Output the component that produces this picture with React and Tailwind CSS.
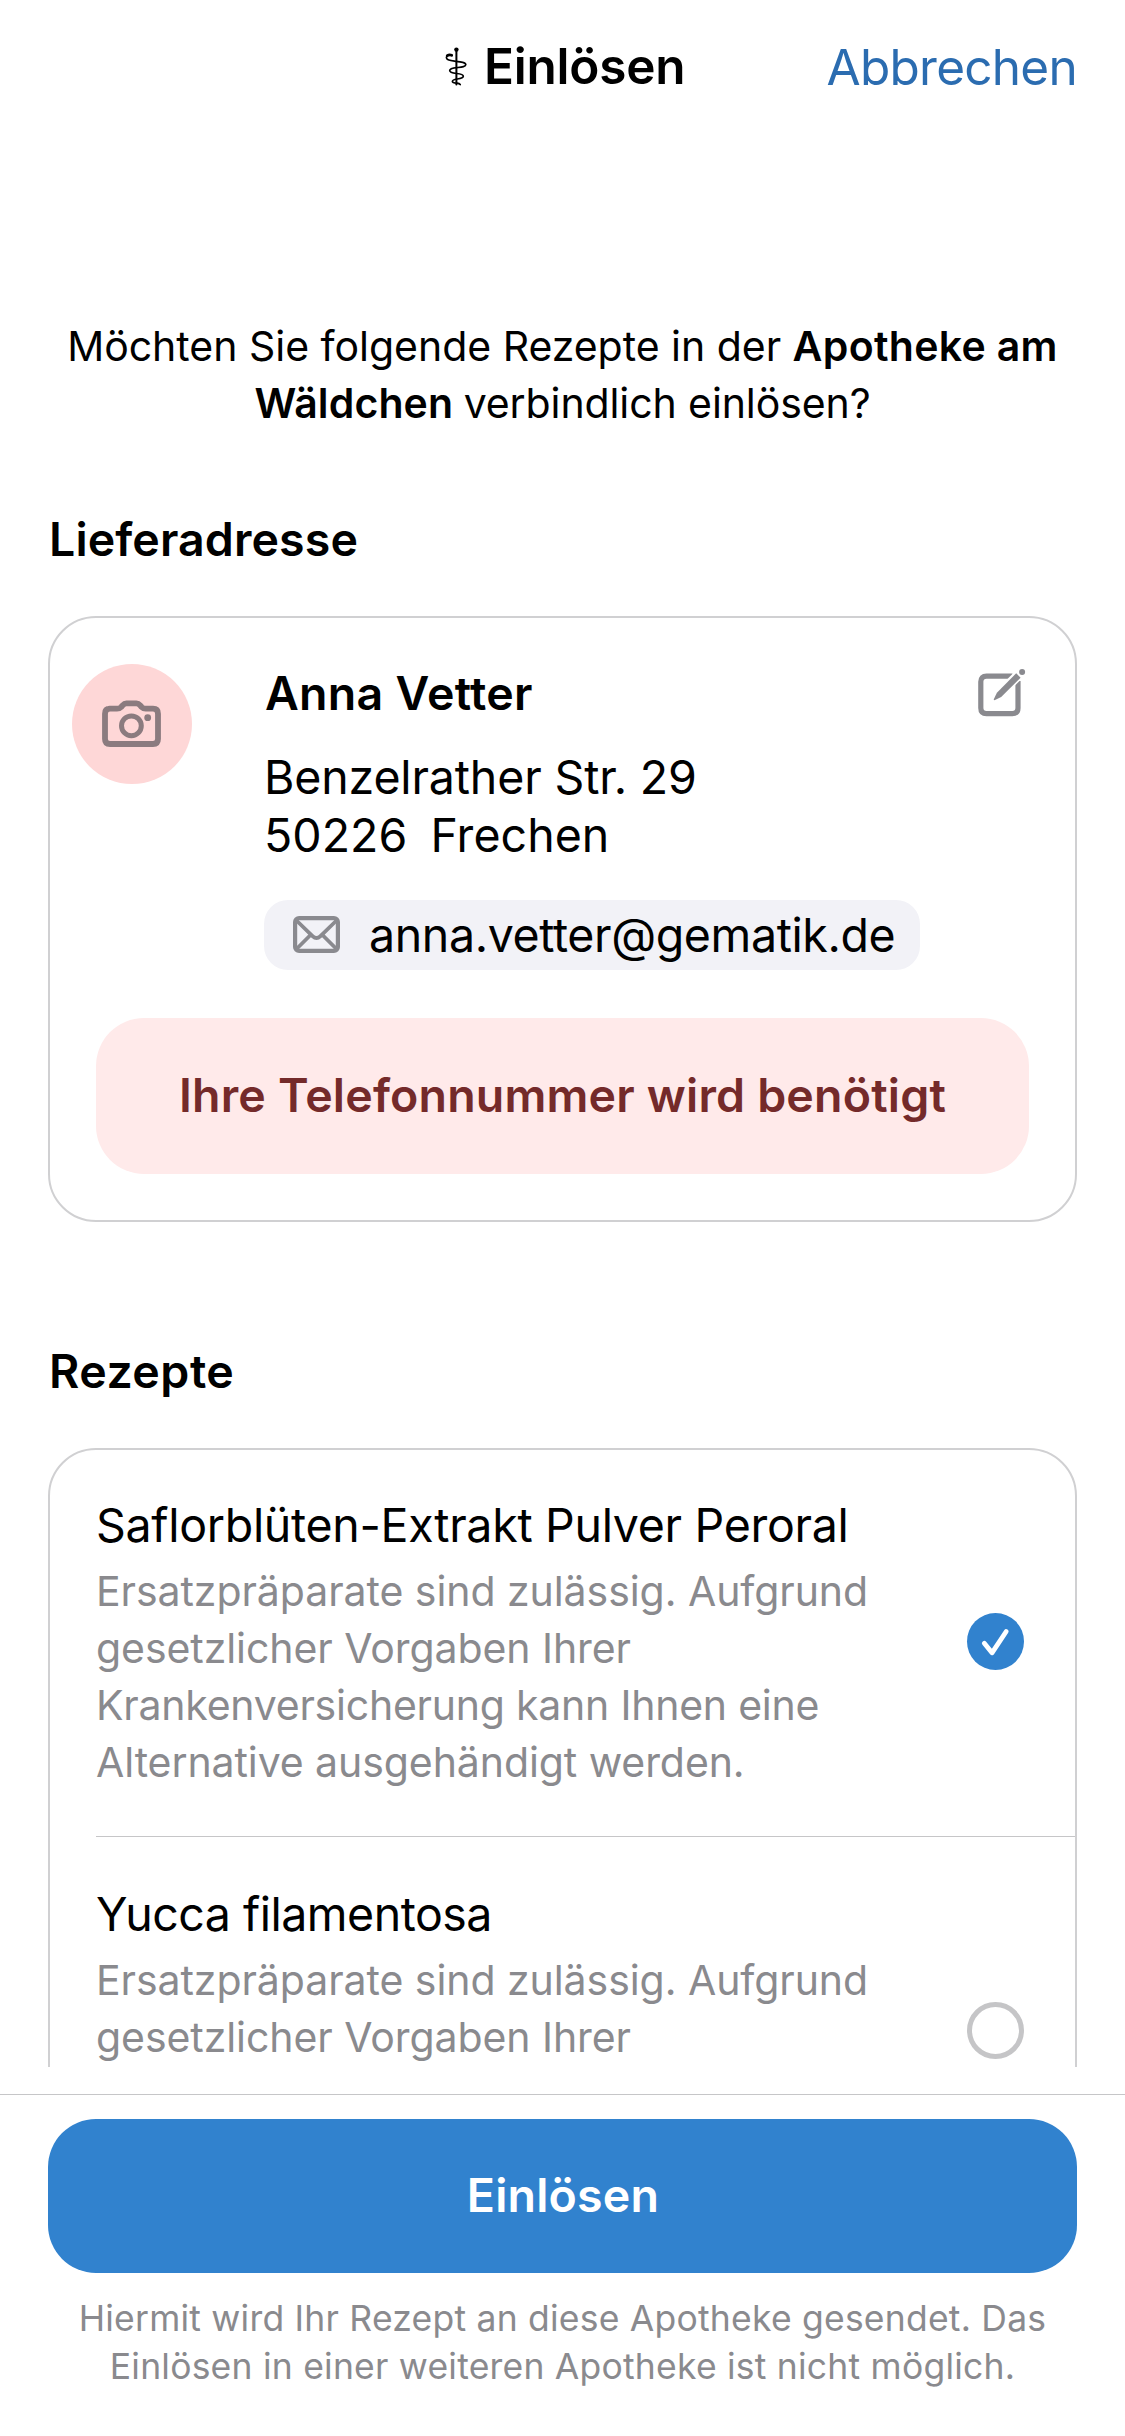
function StaffIcon() {
  return (
    <svg className="h-[40px] w-[24px] shrink-0" viewBox="0 0 24 40" fill="none" stroke="#000" strokeLinecap="round">
      <circle cx="12.4" cy="3.6" r="2.2" fill="#000" stroke="none" />
      <path d="M12.4 4V38.6" strokeWidth="2" />
      <path
        d="M7.6 9.4C5 8.2 2.4 9.6 2.4 11.6C2.4 13.9 6 14.8 10.5 15.2C16 15.7 21.8 16 21.8 18.6C21.8 21 17.5 21.2 13 21.6C9 21.9 5.7 22.4 5.7 24.6C5.7 26.8 9.3 27.2 12.5 27.5C16 27.8 19.3 28.2 19.3 30.3C19.3 32.2 16.5 32.6 13.3 33C10.5 33.4 8.4 33.9 8.4 35.4C8.4 36.7 10.8 37 13 37.2C14.7 37.4 15.6 37.8 16.2 38.6"
        strokeWidth="1.7"
      />
      <path d="M3.2 9.7C4.7 8.7 6.5 8.8 7.8 9.3" strokeWidth="2.6" />
    </svg>
  );
}

function CameraIcon() {
  return (
    <svg className="h-[48px] w-[60px]" viewBox="0 0 60 48" fill="none" stroke="#8b7b7f">
      <path
        d="M7.5 8.7H15C16.8 8.7 18 8.2 19.2 7L20.6 5.4C21.7 4.1 22.6 3.3 24.4 3.3H34.4C36.2 3.3 37.1 4.1 38.2 5.4L39.6 7C40.8 8.2 42 8.7 43.8 8.7H51Q56 8.7 56 13.7V39Q56 44 51 44H8Q3 44 3 39V13.7Q3 8.7 8 8.7Z"
        strokeWidth="5.8"
        strokeLinejoin="round"
      />
      <circle cx="29.4" cy="25.8" r="9.9" strokeWidth="5" />
      <circle cx="45.7" cy="17.7" r="3.4" fill="#8b7b7f" stroke="none" />
    </svg>
  );
}

function EditIcon() {
  return (
    <svg className="h-[50px] w-[50px]" viewBox="0 0 50 50" fill="none">
      <path
        d="M34.5 7.1H8.5Q2.8 7.1 2.8 12.8V39Q2.8 44.6 8.500 44.6H34.300Q40 44.6 40 39V12"
        stroke="#8a8a8f"
        strokeWidth="5.2"
      />
      <path d="M45 1.500L16 30.500" stroke="#fff" strokeWidth="10" />
      <path d="M38.2 4.3L42.6 8.700L23.200 28L17 31.100Q15.400 31.500 15.900 30L18.900 23.800Z" fill="#8a8a8f" />
      <circle cx="44.1" cy="3.1" r="3" fill="#8a8a8f" />
    </svg>
  );
}

function EnvelopeIcon() {
  return (
    <svg className="-mt-px h-[37px] w-[47px] shrink-0" viewBox="0 0 47 37" fill="none" stroke="#8a8a8f">
      <rect x="2.1" y="2.1" width="42.8" height="32.8" rx="4" strokeWidth="4.2" />
      <path d="M3.5 4.5L19.8 20.3Q23.5 23.900 27.2 20.3L43.5 4.5" strokeWidth="3.8" />
      <path d="M3.5 33L17.5 19M43.5 33L29.5 19" strokeWidth="3.8" />
    </svg>
  );
}

function SelectionMark({ checked }) {
  if (!checked) {
    return <span className="-mt-[3px] size-[57px] shrink-0 rounded-full border-5 border-[#c5c5c7]" />;
  }
  return (
    <span className="-mt-[3px] flex size-[57px] shrink-0 items-center justify-center rounded-full bg-[#3182ce]">
      <svg className="size-[57px]" viewBox="0 0 57 57" fill="none">
        <path d="M17.3 30.3L25 39.8L39.2 18.5" stroke="#fff" strokeWidth="4.8" strokeLinecap="round" strokeLinejoin="round" />
      </svg>
    </span>
  );
}

function SectionTitle({ className, children }) {
  return <h2 className={"ml-[49px] text-[46.5px] leading-[58px] font-semibold " + className}>{children}</h2>;
}

export default function App() {
  return (
    <div className="flex h-[2436px] w-[1125px] flex-col overflow-hidden bg-white font-['Inter',sans-serif] whitespace-nowrap text-black">
      <header className="flex h-[132px] shrink-0 items-center pr-[48px] pl-[444px] text-[49.5px] leading-[60px]">
        <StaffIcon />
        <h1 className="ml-[16px] font-semibold tracking-[-0.2px]">Einlösen</h1>
        <button className="mt-[1px] ml-auto tracking-[-0.73px] text-[#2b6cb0]">Abbrechen</button>
      </header>

      <main className="h-[1935px] shrink-0 overflow-hidden">
        <div className="mt-[186px] text-center text-[41px] leading-[57px]">
          <div>
            <span className="tracking-[-0.02px]">Möchten Sie folgende Rezepte in der </span>
            <b className="font-semibold tracking-[0.32px]">Apotheke am</b>
          </div>
          <div>
            <b className="font-semibold tracking-[0.12px]">Wäldchen </b>
            <span className="tracking-[-0.1px]">verbindlich einlösen?</span>
          </div>
        </div>

        <SectionTitle className="mt-[78px] tracking-[0.1px]">Lieferadresse</SectionTitle>
        <section className="mx-12 mt-12 rounded-[48px] border-2 border-[#d0d0d2] pt-[46px] pb-[46px]">
          <div className="flex items-start pl-[22px] text-[46.5px] leading-[58px]">
            <div className="flex size-[120px] items-center justify-center rounded-full bg-[#fed7d7]">
              <CameraIcon />
            </div>
            <div className="ml-[72px] flex flex-col items-start">
              <div className="ml-px font-semibold tracking-[0.28px]">Anna Vetter</div>
              <div className="mt-[26px] tracking-[-0.15px]">Benzelrather Str. 29</div>
              <div className="whitespace-pre tracking-[0.05px] [word-spacing:-1.6px]">50226  Frechen</div>
              <div className="mt-9 flex h-[70px] w-[656px] items-center rounded-[24px] bg-[#f2f2f7] pl-[29px]">
                <EnvelopeIcon />
                <span className="ml-[29px] tracking-[-0.38px]">anna.vetter@gematik.de</span>
              </div>
            </div>
            <button className="mt-[5px] ml-[58px]">
              <EditIcon />
            </button>
          </div>
          <button className="mx-[46px] mt-12 flex h-[156px] w-[933px] items-center justify-center rounded-[48px] bg-[#ffeaea] text-[46.5px] font-semibold tracking-[0.19px] text-[#742a2a]">
            Ihre Telefonnummer wird benötigt
          </button>
        </section>

        <SectionTitle className="mt-[120px] tracking-[0.5px]">Rezepte</SectionTitle>
        <section className="mx-12 mt-12 h-[900px] rounded-t-[48px] border-2 border-[#d0d0d2]">
          <div className="flex items-center justify-between pt-[46px] pr-[51px] pb-[46px] pl-[46px]">
            <div className="h-[294px]">
              <div className="text-[46.5px] leading-[58px] tracking-[-0.3px]">Saflorblüten-Extrakt Pulver Peroral</div>
              <div className="mt-[9px] text-[41px] leading-[57px] text-[#8a8a8e]">
                <div className="tracking-[-0.06px]">Ersatzpräparate sind zulässig. Aufgrund</div>
                <div className="tracking-[-0.07px]">gesetzlicher Vorgaben Ihrer</div>
                <div className="tracking-[-0.23px]">Krankenversicherung kann Ihnen eine</div>
                <div className="tracking-[-0.08px]">Alternative ausgehändigt werden.</div>
              </div>
            </div>
            <SelectionMark checked />
          </div>
          <div className="ml-[46px] h-px bg-[#c6c6c8]" />
          <div className="flex items-center justify-between pt-12 pr-[51px] pb-12 pl-[46px]">
            <div className="h-[294px]">
              <div className="text-[46.5px] leading-[58px] tracking-[-0.5px]">Yucca filamentosa</div>
              <div className="mt-[9px] text-[41px] leading-[57px] text-[#8a8a8e]">
                <div className="tracking-[-0.06px]">Ersatzpräparate sind zulässig. Aufgrund</div>
                <div className="tracking-[-0.07px]">gesetzlicher Vorgaben Ihrer</div>
              </div>
            </div>
            <SelectionMark />
          </div>
        </section>
      </main>

      <footer className="mt-[27px] border-t border-[#c6c6c8] px-12 pt-6 text-center">
        <button className="flex h-[154px] w-full items-center justify-center rounded-[48px] bg-[#3182ce] pl-px text-[46.5px] font-semibold tracking-[0.2px] text-white">
          Einlösen
        </button>
        <div className="mt-[22px] text-[35.5px] leading-[48px] tracking-[0.22px] text-[#8a8a8e]">
          <div>Hiermit wird Ihr Rezept an diese Apotheke gesendet. Das</div>
          <div>Einlösen in einer weiteren Apotheke ist nicht möglich.</div>
        </div>
      </footer>
    </div>
  );
}
